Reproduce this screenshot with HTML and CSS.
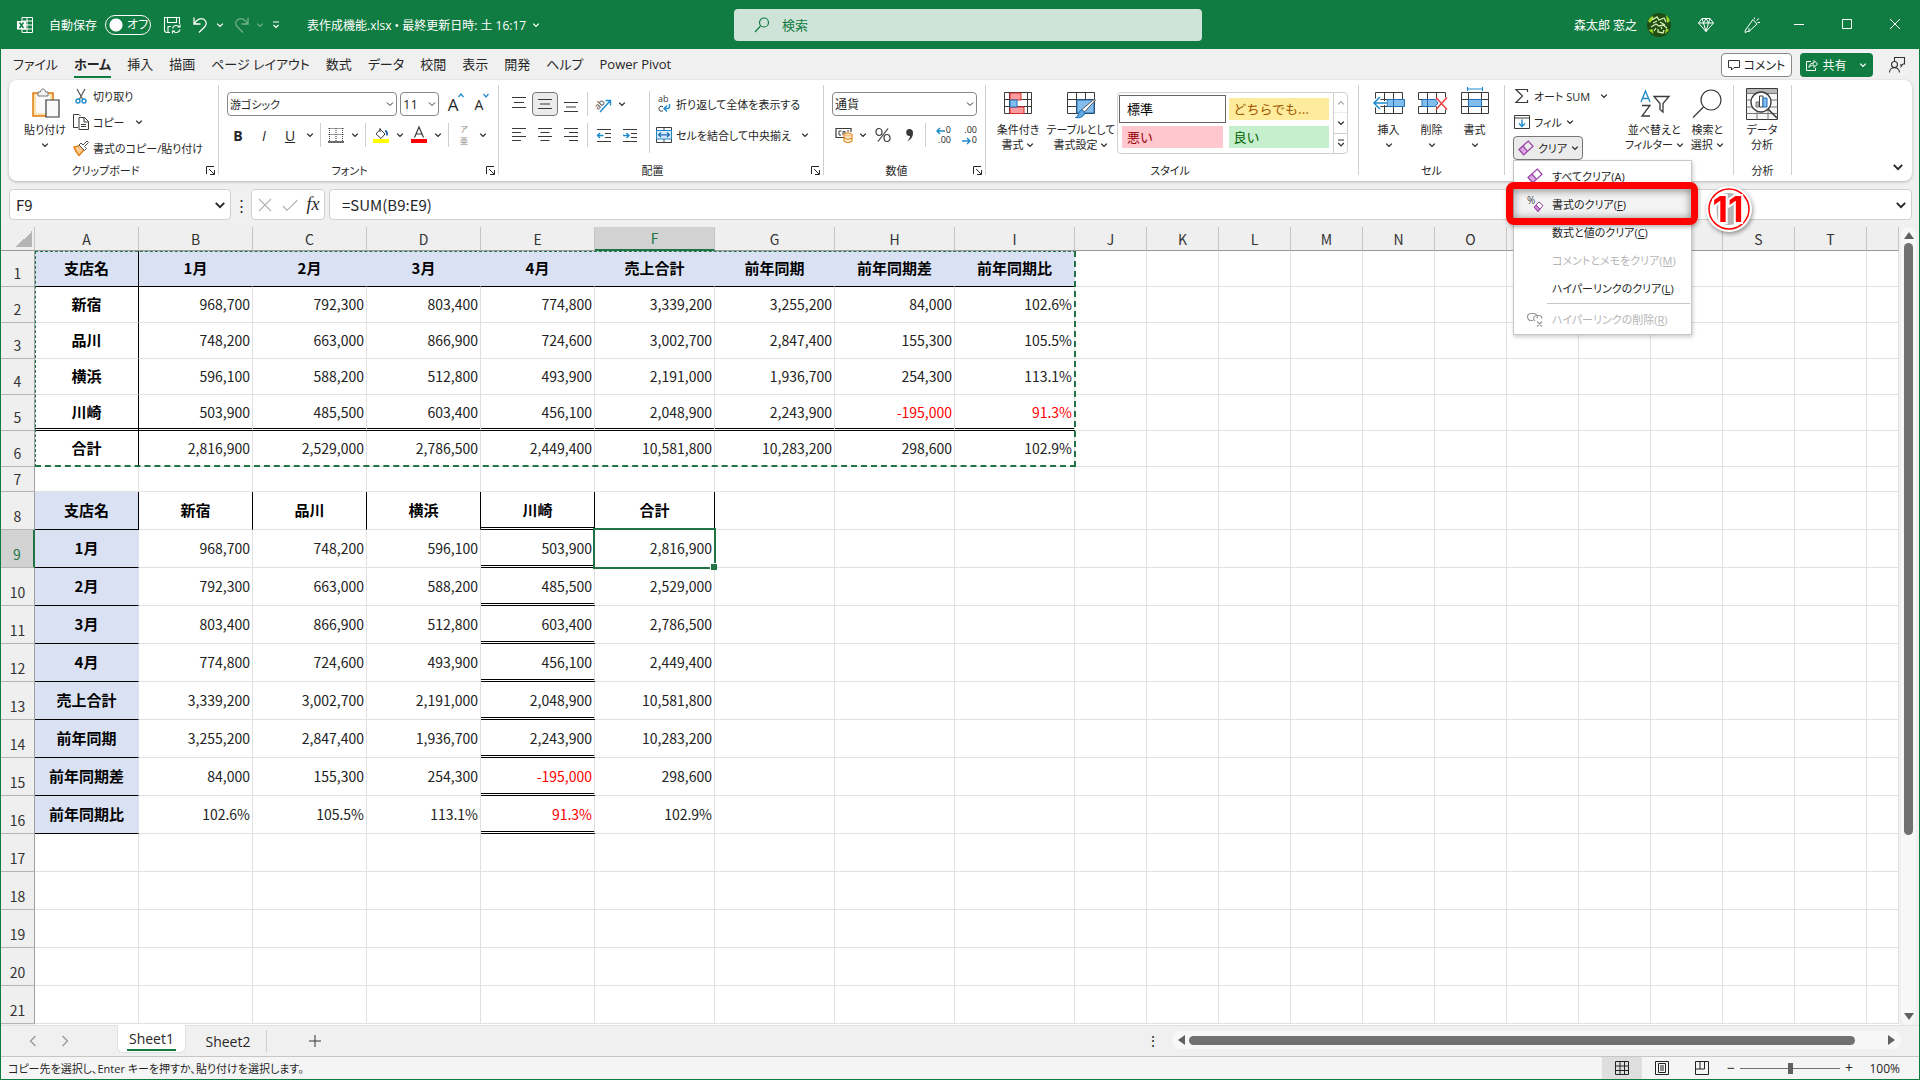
FILE: index.html
```html
<!DOCTYPE html>
<html lang="ja">
<head>
    <meta charset="UTF-8">
    <meta name="viewport" content="width=device-width, initial-scale=1.0">
    <title>表作成機能.xlsx - Excel</title>
    <link rel="stylesheet" href="styles.css">
</head>
<body>
<!-- 共通アイコン -->
<svg class="symbols" aria-hidden="true">
    <symbol id="chev" viewBox="0 0 8 8"><path d="M1.2 2.6 4 5.4 6.8 2.6" fill="none" stroke="currentColor" stroke-width="1.3"/></symbol>
    <symbol id="launch" viewBox="0 0 9 9"><path d="M.5 8V.5H8M3 3l5 5M8.5 4v4.5H4" fill="none" stroke="currentColor"/></symbol>
    <symbol id="eraser" viewBox="0 0 16 16"><path d="M1 9.5 5.5 15 9 11.5 4.8 6z" fill="#d9a9e0"/><path d="M1 9.5 10.3 1 15 6.3 5.6 15zM5 6l4.500 5.300" fill="none" stroke="#9b3fa8" stroke-width="1.2"/></symbol>
</svg>

<div class="window">
    <header class="titlebar">
        <div class="title-left">
            <svg class="i16" viewBox="0 0 16 16" fill="none" stroke="#fff"><path d="M5 4V.5h10.500v15H5V12M5.500 4H15M10 .5v15M9 8h6.500M5 12h10.500"/><rect x="0" y="4" width="9" height="8.500" fill="#fff" stroke="none"/><path d="m2.500 5.500 4 5.500m0-5.500-4 5.500" stroke="#107c41" stroke-width="1.500"/></svg>
            <label for="autosave">自動保存</label>
            <span class="toggle"><input type="checkbox" id="autosave"><span>オフ</span></span>
            <button class="tb" aria-label="保存"><svg class="i18" viewBox="0 0 18 18" fill="none" stroke="#fff" stroke-width="1.100"><path d="M7 16.500H3L1.500 15V1.500h15V8M4.500 1.500v5h9v-5M5 16.500V10.500h3"/><path d="M9.500 12.500a4 4 0 0 1 7-1.500m.5-2.500V11h-2.500M17 13.500a4 4 0 0 1-7 1.500m-.5 2.500V15H12"/></svg></button>
            <button class="tb wide" aria-label="元に戻す"><svg class="i18" viewBox="0 0 18 18" fill="none" stroke="#fff" stroke-width="1.300"><path d="M2 1.500v6.500h6.500M2.500 7.500C5 3 9 1.500 12 3.500c3.500 2.500 2.500 5.500 0 8L7 16.500"/></svg><svg class="c"><use href="#chev"/></svg></button>
            <button class="tb wide dim" aria-label="やり直し"><svg class="i18" viewBox="0 0 18 18" fill="none" stroke="#fff" stroke-width="1.300"><path d="M16 1.500v6.500H9.500M15.500 7.500C13 3 9 1.500 6 3.500 2.500 6 3.500 9 6 11.500l5 5"/></svg><svg class="c"><use href="#chev"/></svg></button>
            <button class="tb" aria-label="クイック アクセス ツール バーのカスタマイズ"><svg class="c" viewBox="0 0 8 8" fill="none" stroke="#fff" stroke-width="1.200"><path d="M1 1h6M1.500 4 4 6.500 6.500 4"/></svg></button>
            <button class="doc-title">表作成機能.xlsx • 最終更新日時: 土 16:17 <svg class="c"><use href="#chev"/></svg></button>
        </div>
        <div class="search">
            <svg class="i16" viewBox="0 0 16 16" fill="none" stroke="#107c41" stroke-width="1.200"><circle cx="10" cy="5.500" r="4.500"/><path d="M6.500 9 1 15"/></svg>
            <input type="text" placeholder="検索" aria-label="検索">
        </div>
        <div class="title-right">
            <span>森太郎 窓之</span>
            <svg class="avatar" viewBox="0 0 24 24"><circle cx="12" cy="12" r="12" fill="#1f4d14"/><path d="M1 8a12 12 0 0 1 4-5l2 2-4 5zM19 2a12 12 0 0 1 4 6l-3 2zM1.500 17l4-1 1 5zM22 17l-3-2-1 6z" fill="#9bd32a"/><path d="M5 7l5-3 2 3 5-2 2 4M6 10l4-2M13 9l5 3M4 14l5-3 3 2 4-1 4 3M7 18l2-3M11 16v3l5 1 1-3M14 14l1 2" fill="none" stroke="#d6efb4" stroke-width="1.300"/></svg>
            <button class="tb" aria-label="プレミアム"><svg class="i16" viewBox="0 0 16 16" fill="none" stroke="#fff"><path d="M4 1.500h8L15.500 6 8 14.500.5 6zM.5 6h15M4 1.500 5.500 6 8 14.500 10.500 6 12 1.500M5.500 6 8 1.500 10.500 6"/></svg></button>
            <button class="tb" aria-label="描画"><svg class="i16" viewBox="0 0 16 16" fill="none" stroke="#fff"><path d="M9 2.500 13 7 5 14.500H3.500L1 15.500 1.500 13zM5 14.500V11M10.500 2V.5M12.500 3.500l2.500-2M13.500 5.500H16"/></svg></button>
            <button class="win" aria-label="最小化"><svg viewBox="0 0 10 10"><path d="M0 5.500h10" stroke="#fff"/></svg></button>
            <button class="win" aria-label="最大化"><svg viewBox="0 0 10 10"><path d="M.5.5h9v9h-9z" fill="none" stroke="#fff"/></svg></button>
            <button class="win" aria-label="閉じる"><svg viewBox="0 0 10 10"><path d="m0 0 10 10M10 0 0 10" stroke="#fff"/></svg></button>
        </div>
    </header>

    <nav class="tabs">
        <button>ファイル</button>
        <button class="active">ホーム</button>
        <button>挿入</button>
        <button>描画</button>
        <button>ページ レイアウト</button>
        <button>数式</button>
        <button>データ</button>
        <button>校閲</button>
        <button>表示</button>
        <button>開発</button>
        <button>ヘルプ</button>
        <button>Power Pivot</button>
        <div class="tab-actions">
            <button class="comment"><svg class="i12" viewBox="0 0 12 12" fill="none" stroke="#333"><path d="M.5 1.500h11v7H6L3.500 11V8.500h-3z"/></svg>コメント</button>
            <button class="share"><svg class="i12" viewBox="0 0 12 12" fill="none" stroke="#fff"><path d="M5 2.500H.5v9h9V9M3 8.500c0-3 2-4.500 5-4.500V1.500l3.500 3.500L8 8.500V6C6 6 4 6.500 3 8.500z"/></svg>共有<svg class="c"><use href="#chev"/></svg></button>
            <button class="person" aria-label="アカウント"><svg class="i16" viewBox="0 0 16 16" fill="none" stroke="#333" stroke-width="1.100"><path d="M5.500 4V.5h10v6.500H14L12 9.500V7"/><circle cx="5.500" cy="7.500" r="3"/><path d="M.5 15.500c0-6.500 10-6.500 10 0"/></svg></button>
        </div>
    </nav>

    <div class="ribbon">
        <section class="group clipboard">
            <div class="group-body">
                <button class="big">
                    <svg class="i32" viewBox="0 0 32 32"><path d="M4 5h20v23H4z" fill="#fbe3b0" stroke="#e07b10" stroke-width="1.500"/><path d="M7 7h14v18H7z" fill="#fafafa"/><path d="M9 8V4h2.500c0-4 5-4 5 0H19v4z" fill="#f5f5f5" stroke="#797775"/><path d="M17 12h13v17H17z" fill="#fafafa" stroke="#3b3a39" stroke-width="1.200"/></svg>
                    貼り付け<br><svg class="c"><use href="#chev"/></svg>
                </button>
                <div class="stack">
                    <button class="small"><svg class="i16" viewBox="0 0 16 16" fill="none"><path d="M4 1l5.500 10M12 1 6.500 11" stroke="#555" stroke-width="1.200"/><circle cx="5" cy="13" r="2" stroke="#1e8bcd" stroke-width="1.400"/><circle cx="11" cy="13" r="2" stroke="#1e8bcd" stroke-width="1.400"/></svg>切り取り</button>
                    <button class="small"><svg class="i16" viewBox="0 0 16 16" fill="none" stroke="#3b3a39"><path d="M5 13.500H.5V.5H6L7.500 2"/><path d="M6 3.500h5.500l4 4v8H6zM11 3.500V8h4.500M8 10.500h5M8 12.500h5"/></svg>コピー<svg class="c gap"><use href="#chev"/></svg></button>
                    <button class="small"><svg class="i16" viewBox="0 0 16 16"><path d="M1 7c3 0 4-1 6-2l4 5-5 5.500C4 13 2 11 1 7z" fill="#fbc98a" stroke="#e07b10" stroke-width="1.300"/><path d="M6 5l2-2 2 2 4-4 1.500 1.500-4 4 2 2-2 2z" fill="#fff" stroke="#555"/></svg>書式のコピー/貼り付け</button>
                </div>
            </div>
            <h2>クリップボード</h2><button class="launcher" aria-label="クリップボード設定"><svg><use href="#launch"/></svg></button>
        </section>

        <section class="group font">
            <div class="group-body rows">
                <div class="row">
                    <select class="font-name" aria-label="フォント"><option>游ゴシック</option></select>
                    <select class="font-size" aria-label="フォント サイズ"><option>11</option></select>
                    <button class="ib letter" aria-label="フォント サイズの拡大"><span class="l18">A</span><svg class="tip" viewBox="0 0 6 8"><path d="M.5 5 3 2l2.500 3" fill="none" stroke="#1e8bcd" stroke-width="1.200"/></svg></button>
                    <button class="ib letter" aria-label="フォント サイズの縮小"><span class="l15">A</span><svg class="tip" viewBox="0 0 6 8"><path d="M.5 2 3 5l2.500-3" fill="none" stroke="#1e8bcd" stroke-width="1.200"/></svg></button>
                </div>
                <div class="row">
                    <button class="ib biu"><b>B</b></button>
                    <button class="ib biu"><i>I</i></button>
                    <button class="ib biu"><u>U</u></button>
                    <button class="cb" aria-label="下線"><svg class="c"><use href="#chev"/></svg></button>
                    <span class="vsep"></span>
                    <button class="ib" aria-label="罫線"><svg class="i16" viewBox="0 0 16 16" fill="none" stroke="#3b3a39"><path d="M.5 1.500h15M.5 7.500h15M1.500 1v13M8 1v13M14.500 1v13" stroke-dasharray="1 1"/><path d="M0 15h16" stroke-width="1.500"/></svg></button>
                    <button class="cb" aria-label="罫線の種類"><svg class="c"><use href="#chev"/></svg></button>
                    <span class="vsep"></span>
                    <button class="ib" aria-label="塗りつぶしの色"><svg class="i16" viewBox="0 0 16 16" fill="none"><path d="M7 2.500 3 7l5 4.500 4-4.500-5-5zM7 5V1" stroke="#3b3a39"/><path d="M12 4c2.500 0 2 3 2 4.500" stroke="#1e5fae" stroke-width="1.800"/><path d="M0 12h16v4H0z" fill="#ff0"/></svg></button>
                    <button class="cb" aria-label="色の選択"><svg class="c"><use href="#chev"/></svg></button>
                    <button class="ib" aria-label="フォントの色"><svg class="i16" viewBox="0 0 16 16"><path d="M3.500 10.500 8 0l4.500 10.500M5 7h6" fill="none" stroke="#3b3a39" stroke-width="1.200"/><path d="M0 12h16v4H0z" fill="#f00"/></svg></button>
                    <button class="cb" aria-label="文字色の選択"><svg class="c"><use href="#chev"/></svg></button>
                    <span class="vsep"></span>
                    <button class="ib ruby" aria-label="ふりがな"><span>ア</span><span>亜</span></button>
                    <button class="cb" aria-label="ふりがなの設定"><svg class="c"><use href="#chev"/></svg></button>
                </div>
            </div>
            <h2>フォント</h2><button class="launcher" aria-label="フォント設定"><svg><use href="#launch"/></svg></button>
        </section>

        <section class="group align">
            <div class="group-body">
                <div class="rows">
                    <div class="row">
                        <button class="ib26" aria-label="上揃え"><svg class="i16" viewBox="0 0 16 16" stroke="#3b3a39" stroke-width="1.200"><path d="M1 1.500h14M3 6.500h10M1 11.500h14"/></svg></button>
                        <button class="ib26 on" aria-label="上下中央揃え"><svg class="i16" viewBox="0 0 16 16" stroke="#3b3a39" stroke-width="1.200"><path d="M1 3.500h14M3 8h10M1 12.500h14"/></svg></button>
                        <button class="ib26" aria-label="下揃え"><svg class="i16" viewBox="0 0 16 16" stroke="#3b3a39" stroke-width="1.200"><path d="M1 6.500h14M3 11h10M1 15.500h14"/></svg></button>
                        <span class="vsep"></span>
                        <button class="ib" aria-label="方向"><svg class="i18" viewBox="0 0 18 18"><text x="0" y="12" class="ab" transform="rotate(-45 6 9)">ab</text><path d="M6 17 16 6M11.500 5.500H16.500V10.500" fill="none" stroke="#1e8bcd" stroke-width="1.400"/></svg></button>
                        <button class="cb" aria-label="方向の選択"><svg class="c"><use href="#chev"/></svg></button>
                    </div>
                    <div class="row">
                        <button class="ib26" aria-label="左揃え"><svg class="i16" viewBox="0 0 16 16" stroke="#3b3a39" stroke-width="1.200"><path d="M1 1.500h14M1 5.500h9M1 9.500h14M1 13.500h9"/></svg></button>
                        <button class="ib26" aria-label="中央揃え"><svg class="i16" viewBox="0 0 16 16" stroke="#3b3a39" stroke-width="1.200"><path d="M1 1.500h14M3.500 5.500h9M1 9.500h14M3.500 13.500h9"/></svg></button>
                        <button class="ib26" aria-label="右揃え"><svg class="i16" viewBox="0 0 16 16" stroke="#3b3a39" stroke-width="1.200"><path d="M1 1.500h14M6 5.500h9M1 9.500h14M6 13.500h9"/></svg></button>
                        <span class="vsep"></span>
                        <button class="ib26" aria-label="インデントを減らす"><svg class="i16" viewBox="0 0 16 16" fill="none" stroke="#3b3a39"><path d="M1 2.500h14M9 6.500h6M9 10.500h6M1 14.500h14"/><path d="M7.500 8.500H1.500M4 6 1.500 8.500 4 11" stroke="#1e8bcd" stroke-width="1.400"/></svg></button>
                        <button class="ib26" aria-label="インデントを増やす"><svg class="i16" viewBox="0 0 16 16" fill="none" stroke="#3b3a39"><path d="M1 2.500h14M9 6.500h6M9 10.500h6M1 14.500h14"/><path d="M1 8.500h6M4.500 6 7 8.500 4.500 11" stroke="#1e8bcd" stroke-width="1.400"/></svg></button>
                    </div>
                </div>
                <span class="vsep tall"></span>
                <div class="rows wrap-col">
                    <button class="small"><svg class="i16" viewBox="0 0 16 16"><text x="2" y="6" class="ab">ab</text><path d="M7 10.500q-4-1-4 2.300t4 2" fill="none" stroke="#3b3a39"/><path d="M13.500 8v2.500q0 2-2 2H8.500M11 9.500 8 12.500l3 3" fill="none" stroke="#1e8bcd" stroke-width="1.400"/></svg>折り返して全体を表示する</button>
                    <button class="small"><svg class="i16" viewBox="0 0 16 16" fill="none"><path d="M.5.5h15v15H.5zM8 .5v3M8 12v3.500" stroke="#3b3a39"/><path d="M.5 3.500h15v8.500H.5z" fill="#d4eafa" stroke="#1e8bcd"/><path d="M3 7.800h10M5 5.500 2.500 7.800 5 10M11 5.500l2.500 2.300L11 10" stroke="#1e6fb8" stroke-width="1.200"/></svg>セルを結合して中央揃え<svg class="c gap"><use href="#chev"/></svg></button>
                </div>
            </div>
            <h2>配置</h2><button class="launcher" aria-label="配置の設定"><svg><use href="#launch"/></svg></button>
        </section>

        <section class="group number">
            <div class="group-body rows">
                <div class="row">
                    <select class="num-format" aria-label="表示形式"><option>通貨</option></select>
                </div>
                <div class="row">
                    <button class="ib" aria-label="通貨表示形式"><svg class="i18" viewBox="0 0 18 18"><path d="M9 11.500H1v-9h15V6" fill="none" stroke="#3b3a39" stroke-width="1.200"/><path d="M6.500 5H4v4h2M8 9V5.500h2V9M12 5h2" fill="none" stroke="#3b3a39"/><ellipse cx="13" cy="8.500" rx="4" ry="1.500" fill="#fbe3b0" stroke="#e07b10"/><path d="M9 8.500v7q4 2.500 8 0v-7M9 12q4 2.500 8 0" fill="#fbe3b0" fill-opacity=".6" stroke="#e07b10"/></svg></button>
                    <button class="cb" aria-label="通貨の選択"><svg class="c"><use href="#chev"/></svg></button>
                    <button class="ib26" aria-label="パーセント"><svg class="i16" viewBox="0 0 16 16" fill="none" stroke="#3b3a39" stroke-width="1.200"><ellipse cx="4" cy="5" rx="3" ry="3.500"/><ellipse cx="12" cy="11" rx="3" ry="3.500"/><path d="M13 1.500 3 14.500"/></svg></button>
                    <button class="ib26" aria-label="桁区切り"><svg class="i16" viewBox="0 0 16 16"><path d="M8.500 2a3.500 3.500 0 0 1 3.500 4c0 4-2.500 7-6 8.500 2-2 3-4 3-5.500A3.500 3.500 0 1 1 8.500 2z" fill="#3b3a39"/></svg></button>
                    <span class="vsep"></span>
                    <button class="ib26 dec" aria-label="小数点以下の表示桁数を増やす"><span><svg class="arr" viewBox="0 0 9 8"><path d="M9 4H1M4 1 1 4l3 3"/></svg>0</span><span>.00</span></button>
                    <button class="ib26 dec" aria-label="小数点以下の表示桁数を減らす"><span>.00</span><span><svg class="arr" viewBox="0 0 9 8"><path d="M0 4h8M5 1l3 3-3 3"/></svg>0</span></button>
                </div>
            </div>
            <h2>数値</h2><button class="launcher" aria-label="数値の設定"><svg><use href="#launch"/></svg></button>
        </section>

        <section class="group styles">
            <div class="group-body">
                <button class="big">
                    <svg class="i32" viewBox="0 0 32 32" fill="none"><path d="M2.500 4.500h27v21h-27zM2.500 11.500h27M2.500 18.500h27M7.500 4.500v21M25.500 4.500v21" fill="#fff" stroke="#3b3a39"/><path d="M8 5h11v7H8zM8 19h14v6.500H8z" fill="#ff9a9e" stroke="#d92c2c"/><path d="M8 12h7v7H8z" fill="#83bdec" stroke="#1e6fb8"/></svg>
                    条件付き<br>書式 <svg class="c"><use href="#chev"/></svg>
                </button>
                <button class="big wide-big">
                    <svg class="i32" viewBox="0 0 32 32" fill="none"><path d="M2.500 4.500h27v21h-27zM2.500 11.500h27M2.500 18.500h27M11.500 4.500v21M20.500 4.500v21" fill="#fff" stroke="#3b3a39"/><path d="M12 12h17v13H12z" fill="#83bdec" stroke="#1e6fb8"/><path d="m30.500 12-11 12-3-2 11-9.500q3-2 3-.5z" fill="#fff" stroke="#555"/><path d="M16.500 22q4 1 3 4-3 5-9 3.500 3-1 3-4 1-3 3-3.500z" fill="#62a9e0" stroke="#1e6fb8"/></svg>
                    テーブルとして<br>書式設定 <svg class="c"><use href="#chev"/></svg>
                </button>
                <div class="gallery">
                    <div class="swatches">
                        <button class="sw normal">標準</button>
                        <button class="sw neutral">どちらでも...</button>
                        <button class="sw bad">悪い</button>
                        <button class="sw good">良い</button>
                    </div>
                    <div class="gallery-nav">
                        <button class="dim" aria-label="前へ"><svg class="c flip"><use href="#chev"/></svg></button>
                        <button aria-label="次へ"><svg class="c"><use href="#chev"/></svg></button>
                        <button aria-label="その他"><svg class="c" viewBox="0 0 8 8" fill="none" stroke="#333" stroke-width="1.200"><path d="M1 1h6M1.200 4 4 6.800 6.800 4"/></svg></button>
                    </div>
                </div>
            </div>
            <h2>スタイル</h2>
        </section>

        <section class="group cells">
            <div class="group-body">
                <button class="big narrow">
                    <svg class="i32" viewBox="0 0 32 32" fill="none"><path d="M2.500 4.500h27v21h-27zM2.500 11.500h27M2.500 18.500h27M11.500 4.500v21M20.500 4.500v21" fill="#fff" stroke="#3b3a39"/><path d="M14 11.500h17.500v7H14zM20.500 12v6.500" fill="#83bdec" stroke="#1e6fb8"/><path d="M1 15h13M7 9l-6 6 6 6" stroke="#fff" stroke-width="4"/><path d="M1 15h13M7 9l-6 6 6 6" stroke="#1e8bcd" stroke-width="1.500"/></svg>
                    挿入<br><svg class="c"><use href="#chev"/></svg>
                </button>
                <button class="big narrow">
                    <svg class="i32" viewBox="0 0 32 32" fill="none"><path d="M2.500 11.500v-7h27v5M2.500 11.500h17M11.500 4.500v7M20.500 4.500v7M2.500 18.500v7h27v-4M2.500 18.500h17M11.500 18.500v7M20.500 18.500v7" stroke="#3b3a39"/><path d="M6 11.500h13l3 3.500-3 3.500H6zM11.500 12v6" fill="#83bdec" stroke="#1e6fb8"/><path d="m20 9.500 11 12M31 9.500l-11 12" stroke="#ee3e3e" stroke-width="1.500"/></svg>
                    削除<br><svg class="c"><use href="#chev"/></svg>
                </button>
                <button class="big narrow">
                    <svg class="i32" viewBox="0 0 32 32" fill="none"><path d="M2.500 4.500h27v21h-27zM2.500 11.500h27M2.500 18.500h27M9.500 4.500v21M22.500 4.500v21" fill="#fff" stroke="#3b3a39"/><path d="M9.500 11.500h13v7h-13z" fill="#83bdec" stroke="#1e6fb8"/><path d="M8.500 1h15M8.500-1v4M23.500-1v4" stroke="#1e8bcd" stroke-width="1.200"/></svg>
                    書式<br><svg class="c"><use href="#chev"/></svg>
                </button>
            </div>
            <h2>セル</h2>
        </section>

        <section class="group edit">
            <div class="group-body">
                <div class="stack">
                    <button class="small"><svg class="i16" viewBox="0 0 16 16"><path d="M13.500 4V1.500H2L8.500 8 2 14.500h11.500V12" fill="none" stroke="#3b3a39" stroke-width="1.200"/></svg>オート SUM<svg class="c gap"><use href="#chev"/></svg></button>
                    <button class="small"><svg class="i16" viewBox="0 0 16 16" fill="none"><path d="M.5 1.500h15v13H.5zM.5 4h15" stroke="#3b3a39"/><path d="M8 5.500v7M5 9.500l3 3 3-3" stroke="#1e8bcd" stroke-width="1.400"/></svg>フィル <svg class="c"><use href="#chev"/></svg></button>
                    <div class="clear">
                        <button class="small open" aria-expanded="true"><svg class="i16"><use href="#eraser"/></svg>クリア <svg class="c"><use href="#chev"/></svg></button>
                        <div class="menu" role="menu">
                            <button role="menuitem"><svg class="i16"><use href="#eraser"/></svg><span>すべてクリア(<u>A</u>)</span></button>
                            <button role="menuitem" class="hover"><svg class="i16" viewBox="0 0 16 16"><text x="0" y="8" class="pct">%</text><path d="m7 11 5-5 4 3.500L11 15.500z" fill="#fff" stroke="#9b3fa8"/><path d="m7 11 2-2 4 4-2 2.500z" fill="#c98ad2" stroke="#9b3fa8"/></svg><span>書式のクリア(<u>F</u>)</span>
                            </button>
                            <button role="menuitem"><i class="i16"></i><span>数式と値のクリア(<u>C</u>)</span></button>
                            <button role="menuitem" disabled><i class="i16"></i><span>コメントとメモをクリア(<u>M</u>)</span></button>
                            <button role="menuitem"><i class="i16"></i><span>ハイパーリンクのクリア(<u>L</u>)</span></button>
                            <hr>
                            <button role="menuitem" disabled><svg class="i16" viewBox="0 0 16 16" fill="none" stroke="#999" stroke-width="1.200"><path d="M6 9.500H4a3.500 3.500 0 0 1 0-7h3a3.500 3.500 0 0 1 3 5M8 10a3 3 0 0 1 1-5.500h3a3 3 0 0 1 3 3M10 10.500l5 5M15 10.500l-5 5"/></svg><span>ハイパーリンクの削除(<u>R</u>)</span></button>
                            <div class="callout">
                                <svg viewBox="0 0 48 48"><circle cx="24" cy="24" r="23" fill="#fff"/><path d="M13 12q11-8 22 0 3 12 0 24-11 8-22 0-3-12 0-24z" fill="#b5b5b5"/><circle cx="24" cy="24" r="20" fill="none" stroke="#f00" stroke-width="1.500"/><text x="23" y="37" text-anchor="middle">11</text></svg>
                            </div>
                        </div>
                    </div>
                </div>
                <button class="big sort">
                    <svg class="i32" viewBox="0 0 32 32" fill="none" stroke-width="1.300"><path d="m3 14 4.500-11L12 14M4.500 10.500h6" stroke="#1e8bcd"/><path d="M4 17.500h8L4 28h8" stroke="#3b3a39"/><path d="M16 8.500h15l-6 7v8.500l-3-2.500v-6z" stroke="#3b3a39"/></svg>
                    並べ替えと<br>フィルター <svg class="c"><use href="#chev"/></svg>
                </button>
                <button class="big">
                    <svg class="i32" viewBox="0 0 32 32" fill="none" stroke="#3b3a39" stroke-width="1.200"><circle cx="20" cy="12" r="10"/><path d="M12.500 19 2 29.500"/></svg>
                    検索と<br>選択 <svg class="c"><use href="#chev"/></svg>
                </button>
            </div>
        </section>

        <section class="group analysis">
            <div class="group-body">
                <button class="big">
                    <svg class="i32" viewBox="0 0 32 32" fill="none" stroke="#3b3a39"><path d="M.5.500h31v31H.5z" fill="#f6f6f6"/><path d="M1 1h30v4H1z" fill="#b8b8b8" stroke="none"/><path d="M.5 5.500h31M.5 12h31M.5 19h31M.5 25.500h31M11 5.500v26M22 5.500v26" stroke="#777"/><circle cx="15" cy="14" r="10" fill="#fff" stroke-width="1.300"/><path d="M10 14h3v5h-3z" fill="#bbb" stroke="#777"/><path d="M13.500 8h3.500v11h-3.500z" fill="#fff"/><path d="M17 10h4v9h-4z" fill="#83bdec" stroke="#1e6fb8"/><path d="m22 21 9 9" stroke-width="1.600"/></svg>
                    データ<br>分析
                </button>
            </div>
            <h2>分析</h2>
        </section>
        <button class="collapse" aria-label="リボンを折りたたむ"><svg class="c12"><use href="#chev"/></svg></button>
    </div>

    <div class="formula-bar">
        <div class="namebox"><input type="text" value="F9" aria-label="名前ボックス"><svg class="c12"><use href="#chev"/></svg></div>
        <span class="dots">⋮</span>
        <div class="fx">
            <button aria-label="キャンセル"><svg class="i16" viewBox="0 0 16 16" stroke="#b5b5b5" stroke-width="1.200"><path d="m2 2 12 12M14 2 2 14"/></svg></button>
            <button aria-label="入力"><svg class="i16" viewBox="0 0 16 16" fill="none" stroke="#b5b5b5" stroke-width="1.200"><path d="m1 9 4 4.500L15.500 3"/></svg></button>
            <button class="fx-btn" aria-label="関数の挿入">fx</button>
        </div>
        <div class="formula"><input type="text" value="=SUM(B9:E9)" aria-label="数式"><svg class="c12"><use href="#chev"/></svg></div>
    </div>

    <main class="workspace">
        <div class="sheet-wrap">
            <table class="sheet" id="sheet"></table>
            <div class="ants"></div>
        </div>
        <div class="vscroll"><i class="up"></i><i class="thumb"></i><i class="down"></i></div>
    </main>

    <footer class="sheet-tabs">
        <button class="nav" aria-label="前のシート"><svg viewBox="0 0 8 12" fill="none" stroke="#999" stroke-width="1.300"><path d="M6.500 1 1.500 6l5 5"/></svg></button>
        <button class="nav" aria-label="次のシート"><svg viewBox="0 0 8 12" fill="none" stroke="#999" stroke-width="1.300"><path d="m1.500 1 5 5-5 5"/></svg></button>
        <button class="sheet-tab active"><span>Sheet1</span></button>
        <button class="sheet-tab">Sheet2</button>
        <button class="add" aria-label="新しいシート"><svg viewBox="0 0 12 12" stroke="#333"><path d="M6 0v12M0 6h12"/></svg></button>
        <span class="dots">⋮</span>
        <div class="hscroll"><i class="left"></i><i class="thumb"></i><i class="right"></i></div>
    </footer>

    <div class="status">
        <span class="message">コピー先を選択し、Enter キーを押すか、貼り付けを選択します。</span>
        <button class="view on" aria-label="標準"><svg viewBox="0 0 14 14" fill="none" stroke="#222"><path d="M.5.500h13v13H.5zM.5 5h13M.5 9.500h13M5 .5v13M9.500.5v13"/></svg></button>
        <button class="view" aria-label="ページ レイアウト"><svg viewBox="0 0 14 14" fill="none" stroke="#222"><path d="M.5.500h13v13H.5zM3.500 2.500h7v9h-7zM5 5h4M5 7h4M5 9h4"/></svg></button>
        <button class="view" aria-label="改ページ プレビュー"><svg viewBox="0 0 14 14" fill="none" stroke="#222"><path d="M.5.500h13v13H.5zM5 .5v7.500M9.500.5v7.500M.5 8h9"/></svg></button>
        <button class="zoom-btn" aria-label="縮小">−</button>
        <input type="range" min="0" max="200" value="100" aria-label="ズーム">
        <button class="zoom-btn" aria-label="拡大">+</button>
        <span class="percent">100%</span>
    </div>
</div>
<script src="sheet.js"></script>
</body>
</html>
```
FILE: sheet.js
```js
// セルのデータ(行番号 -> A列からの値)
const data = {
    1: ['支店名', '1月', '2月', '3月', '4月', '売上合計', '前年同期', '前年同期差', '前年同期比'],
    2: ['新宿', '968,700', '792,300', '803,400', '774,800', '3,339,200', '3,255,200', '84,000', '102.6%'],
    3: ['品川', '748,200', '663,000', '866,900', '724,600', '3,002,700', '2,847,400', '155,300', '105.5%'],
    4: ['横浜', '596,100', '588,200', '512,800', '493,900', '2,191,000', '1,936,700', '254,300', '113.1%'],
    5: ['川崎', '503,900', '485,500', '603,400', '456,100', '2,048,900', '2,243,900', '-195,000', '91.3%'],
    6: ['合計', '2,816,900', '2,529,000', '2,786,500', '2,449,400', '10,581,800', '10,283,200', '298,600', '102.9%'],
    8: ['支店名', '新宿', '品川', '横浜', '川崎', '合計'],
    9: ['1月', '968,700', '748,200', '596,100', '503,900', '2,816,900'],
    10: ['2月', '792,300', '663,000', '588,200', '485,500', '2,529,000'],
    11: ['3月', '803,400', '866,900', '512,800', '603,400', '2,786,500'],
    12: ['4月', '774,800', '724,600', '493,900', '456,100', '2,449,400'],
    13: ['売上合計', '3,339,200', '3,002,700', '2,191,000', '2,048,900', '10,581,800'],
    14: ['前年同期', '3,255,200', '2,847,400', '1,936,700', '2,243,900', '10,283,200'],
    15: ['前年同期差', '84,000', '155,300', '254,300', '-195,000', '298,600'],
    16: ['前年同期比', '102.6%', '105.5%', '113.1%', '91.3%', '102.9%']
};
const columns = 'ABCDEFGHIJKLMNOPQRST'.split('').concat('');
const sheet = document.getElementById('sheet');

function colClass(c) {
    if (c === 0) return 'w-a';
    if (c < 5) return 'w-month';
    if (c < 9) return 'w-total';
    return c < 20 ? 'w-std' : '';
}

// セルの書式
function cellClass(r, c, text) {
    const cls = [];
    if (r === 1 || r === 8 || c === 0) cls.push('head');
    if ((r === 1 && c < 9) || (c === 0 && r >= 8 && r <= 16)) cls.push('fill');
    if (c === 0 && r <= 6) cls.push('line-r');
    if (r === 1 && c < 9) cls.push('line-b');
    if (r === 5 && c < 9) cls.push('double-b');
    if (r === 8 && c < 6) cls.push('line-r');
    if (c === 0 && r >= 8 && r <= 16) cls.push('line-b');
    if (c === 4 && r >= 8 && r <= 16) cls.push('double-b');
    if (text === '-195,000' || text === '91.3%') cls.push('minus');
    if (r === 9 && c === 5) cls.push('selected');
    return cls.join(' ');
}

let html = '<colgroup><col class="w-row">';
columns.forEach((name, c) => { html += `<col class="${colClass(c)}">`; });
html += '</colgroup><thead><tr><th class="corner"></th>';
columns.forEach(name => { html += `<th class="${name === 'F' ? 'current' : ''}">${name}</th>`; });
html += '</tr></thead><tbody>';

for (let r = 1; r <= 21; r++) {
    const rowClass = r === 7 ? 'short' : r > 7 ? 'tall' : '';
    html += `<tr class="${rowClass}"><th class="${r === 9 ? 'current' : ''}">${r}</th>`;
    columns.forEach((name, c) => {
        const text = (data[r] && data[r][c]) || '';
        html += `<td class="${cellClass(r, c, text)}">${text}</td>`;
    });
    html += '</tr>';
}
sheet.innerHTML = html + '</tbody>';
```
FILE: styles.css
```css
* {
    box-sizing: border-box;
}
body {
    margin: 0;
    background: #f0f0f0;
    color: #262626;
    font: 12px "Open Sans", "Noto Sans CJK JP", sans-serif;
    font-feature-settings: "palt";
}
button, input, select {
    font: inherit;
    font-feature-settings: inherit;
    color: inherit;
    margin: 0;
    padding: 0;
    border: 0;
    background: none;
}
svg {
    flex: none;
    overflow: visible;
}
.symbols {
    display: none;
}
.window {
    display: flex;
    flex-direction: column;
    height: 100vh;
    border: 1px solid #107c41;
    border-top: 0;
    overflow: hidden;
}

/* icon sizes */
.i12 { width: 12px; height: 12px; }
.i16 { width: 16px; height: 16px; flex: none; }
.i18 { width: 18px; height: 18px; }
.i32 { width: 32px; height: 32px; }
.c { width: 8px; height: 8px; }
.c12 { width: 12px; height: 12px; }
.flip { transform: rotate(180deg); }

/* title bar */
.titlebar {
    display: grid;
    grid-template-columns: 733fr 468fr 717fr;
    align-items: center;
    height: 49px;
    background: #107c41;
    color: #fff;
}
.title-left, .title-right {
    display: flex;
    align-items: center;
    height: 40px;
}
.title-left {
    padding-left: 16px;
}
.title-left label {
    margin: 0 8px 0 16px;
}
.toggle {
    position: relative;
    display: flex;
    width: 46px;
    height: 20px;
    margin-right: 12px;
}
.toggle input {
    appearance: none;
    width: 46px;
    height: 20px;
    border: 1px solid #fff;
    border-radius: 10px;
    background: radial-gradient(circle at 10px 9px, #fff 6px, transparent 7px);
}
.toggle span {
    position: absolute;
    left: 22px;
    top: 1px;
    line-height: 18px;
}
.tb {
    display: flex;
    align-items: center;
    gap: 6px;
    margin-right: 11px;
}
.tb.wide {
    margin-right: 8px;
}
.dim {
    opacity: .4;
}
.doc-title {
    display: flex;
    align-items: center;
    gap: 6px;
    margin-left: 16px;
    white-space: nowrap;
}
.search {
    display: flex;
    align-items: center;
    gap: 12px;
    height: 32px;
    padding-left: 20px;
    border-radius: 4px;
    background: #cfe3d8;
}
.search input {
    flex: 1;
    outline: 0;
    font-size: 13px;
}
.search input::placeholder {
    color: #107c41;
    opacity: 1;
}
.title-right {
    justify-content: flex-end;
}
.avatar {
    width: 24px;
    height: 24px;
    margin: 0 27px 0 10px;
}
.title-right .tb {
    margin-right: 30px;
}
.title-right .tb + .win {
    margin-left: -15px;
}
.win {
    width: 48px;
    height: 40px;
}
.win svg {
    width: 10px;
    height: 10px;
}

/* ribbon tabs */
.tabs {
    display: flex;
    align-items: center;
    gap: 16px;
    height: 31px;
    padding: 0 6px 0 12px;
    font-size: 13px;
    background: #f0f0f0;
}
.tabs > button {
    height: 27px;
    padding: 0;
    white-space: nowrap;
    border-bottom: 2px solid transparent;
    line-height: 24px;
}
.tabs > .active {
    font-weight: bold;
    border-color: #107c41;
}
.tab-actions {
    display: flex;
    gap: 8px;
    margin-left: auto;
    font-size: 12px;
}
.tab-actions button {
    display: flex;
    align-items: center;
    justify-content: center;
    gap: 4px;
    height: 24px;
    border-radius: 4px;
}
.tab-actions .comment {
    width: 71px;
    border: 1px solid #8a8886;
    background: #fff;
}
.tab-actions .share {
    width: 73px;
    background: #107c41;
    color: #fff;
}
.share .c {
    margin-left: 8px;
}
.person {
    width: 32px;
}

/* ribbon */
.ribbon {
    display: flex;
    height: 101px;
    flex: none;
    margin: 0 7px 0 8px;
    padding: 5px 0 6px;
    background: #fff;
    border-radius: 8px;
    box-shadow: 0 1px 3px rgba(0, 0, 0, .25);
    font-size: 11px;
}
.group {
    position: relative;
    flex: none;
    height: 90px;
    border-right: 1px solid #d2d0ce;
}
.group-body {
    display: flex;
    height: 78px;
    margin-top: -2px;
}
.group h2 {
    margin: 0;
    font-size: 11px;
    font-weight: normal;
    line-height: 20px;
    text-align: center;
}
.launcher {
    position: absolute;
    right: 3px;
    bottom: 0;
    width: 9px;
    height: 9px;
}
.launcher svg {
    display: block;
    width: 9px;
    height: 9px;
}
.clipboard { width: 210px; padding-left: 8px; }
.font { width: 280px; padding-left: 6px; }
.align { width: 325px; padding-left: 7px; }
.number { width: 162px; padding-left: 8px; }
.styles { width: 373px; padding-left: 4px; }
.cells { width: 146px; padding-left: 8px; }
.edit { width: 229px; padding-left: 9px; }
.analysis { width: 58px; }
.group.clipboard h2, .group.font h2, .group.align h2, .group.number h2 {
    padding-right: 24px;
}
.group.styles h2, .group.cells h2 {
    padding-right: 8px;
}
.big {
    width: 56px;
    padding-top: 5px;
    line-height: 15px;
    white-space: nowrap;
    display: block;
    align-self: flex-start;
    text-align: center;
}
.big .i32 {
    display: block;
    margin: 0 auto 2px;
}
.big.wide-big { width: 70px; }
.big.narrow { width: 43px; }
.big.sort { width: 60px; margin-left: 16px; }
.edit .big + .big { width: 46px; }
.small {
    display: flex;
    align-items: center;
    gap: 4px;
    height: 26px;
    white-space: nowrap;
}
.small .gap {
    margin-left: 6px;
}
.rows {
    display: flex;
    flex-direction: column;
    gap: 7px;
    padding-top: 9px;
}
.row {
    display: flex;
    align-items: center;
    height: 24px;
}
.rows .small {
    height: 24px;
}
.ib, .ib26, .cb {
    display: flex;
    align-items: center;
    justify-content: center;
    width: 24px;
    height: 24px;
}
.ib26, .biu {
    width: 26px;
}
.biu {
    font-size: 14px;
}
.cb {
    width: 14px;
}
.letter {
    width: 26px;
}
.l18 { font-size: 17px; }
.l15 { font-size: 14px; }
.tip {
    width: 6px;
    height: 8px;
    align-self: flex-start;
}
.vsep {
    width: 1px;
    height: 24px;
    margin: 0 3px;
    background: #d2d0ce;
}
.vsep.tall {
    height: 62px;
    margin: 8px 6px 0 6px;
}
select {
    appearance: none;
    height: 24px;
    padding: 0 2px;
    border: 1px solid #8a8886;
    border-radius: 4px;
    background: #fff url("data:image/svg+xml,%3Csvg xmlns='http://www.w3.org/2000/svg' width='8' height='8'%3E%3Cpath d='M1 2.500 4 5.500 7 2.500' fill='none' stroke='%23333'/%3E%3C/svg%3E") no-repeat right 2px center;
}
.font-name { width: 170px; margin: 0 3px 0 2px; }
.font-size { width: 39px; margin-right: 4px; font-size: 13px; }
.num-format { width: 145px; font-size: 12px; }
.ruby {
    flex-direction: column;
    color: #8a8886;
    font-size: 8px;
    line-height: 12px;
}
.on {
    border: 1px solid #797775;
    border-radius: 4px;
    background: #ebebeb;
}
.ab {
    font-size: 9px;
    fill: #3b3a39;
}
.dec {
    flex-direction: column;
    font-size: 9px;
    line-height: 10px;
    align-items: flex-end;
    padding-right: 4px;
}
.arr {
    width: 9px;
    height: 8px;
    margin-right: 1px;
    fill: none;
    stroke: #1e8bcd;
    stroke-width: 1.4px;
    vertical-align: middle;
}
.gallery {
    display: flex;
    width: 231px;
    height: 62px;
    margin: 9px 0 0 1px;
    border: 1px solid #d2d0ce;
    border-radius: 4px;
}
.swatches {
    flex: 1;
    display: grid;
    grid-template-columns: 1fr 1fr;
    grid-auto-rows: 22px;
    gap: 6px;
    padding: 5px 4px;
}
.sw {
    padding-left: 5px;
    text-align: left;
    font: 13px/18px "Noto Sans CJK JP", sans-serif;
    font-feature-settings: normal;
    white-space: nowrap;
}
.normal { outline: 1px solid #666; outline-offset: 2px; color: #000; }
.neutral { background: #ffeb9c; color: #9c5700; }
.bad { background: #ffc7ce; color: #9c0006; }
.good { background: #c6efce; color: #006100; }
.gallery-nav {
    display: flex;
    flex-direction: column;
    width: 14px;
    border-left: 1px solid #d2d0ce;
}
.gallery-nav button {
    display: flex;
    align-items: center;
    justify-content: center;
    flex: 1;
    border-bottom: 1px solid #d2d0ce;
}
.gallery-nav button:last-child {
    border: 0;
}
.collapse {
    margin: auto 8px 2px auto;
    height: 12px;
}

/* clear menu */
.clear {
    position: relative;
}
.small.open {
    width: 70px;
    height: 24px;
    margin: 1px 0 1px -1px;
    padding-left: 4px;
    border: 1px solid #797775;
    border-radius: 4px;
    background: #ebebeb;
}
.menu {
    position: absolute;
    z-index: 5;
    top: 24px;
    left: -1px;
    width: 179px;
    padding: 1px;
    border: 1px solid #c8c6c4;
    background: #fff;
    box-shadow: 1px 2px 4px rgba(0, 0, 0, .2);
}
.menu button {
    display: flex;
    align-items: center;
    gap: 9px;
    width: 100%;
    height: 28px;
    padding-left: 12px;
    font-size: 11px;
    white-space: nowrap;
    color: #222;
}
.menu button:disabled {
    color: #b5b5b5;
}
.menu .hover {
    background: #f3f3f3;
}
.menu hr {
    height: 1px;
    margin: 1px 0 1px 32px;
    border: 0;
    background: #c8c6c4;
}
.pct {
    font-size: 10px;
    fill: #444;
}
.callout {
    position: absolute;
    top: 21px;
    left: -8px;
    width: 192px;
    height: 43px;
    border: 7px solid #f00;
    border-radius: 8px;
    box-shadow: inset 0 1px 8px rgba(0, 0, 0, .5), 1px 2px 4px rgba(0, 0, 0, .3);
}
.callout svg {
    position: absolute;
    top: -4px;
    left: 192px;
    width: 48px;
    height: 48px;
    filter: drop-shadow(1px 2px 2px rgba(0, 0, 0, .4));
}
.callout text {
    font: bold 36px Inter, sans-serif;
    fill: #f00;
    stroke: #fff;
    stroke-width: 4px;
    paint-order: stroke;
}

/* formula bar */
.formula-bar {
    display: flex;
    height: 31px;
    flex: none;
    margin: 8px 7px 7px 8px;
    font: 15px "Noto Sans CJK JP", sans-serif;
}
.namebox, .fx, .formula {
    display: flex;
    align-items: center;
    border: 1px solid #d2d0ce;
    border-radius: 4px;
    background: #fff;
}
.namebox {
    width: 222px;
    padding: 0 4px 0 6px;
}
.namebox input, .formula input {
    flex: 1;
    min-width: 0;
    outline: 0;
}
.formula-bar .dots {
    width: 20px;
    text-align: center;
    line-height: 31px;
}
.fx {
    justify-content: space-around;
    width: 74px;
    margin-right: 4px;
}
.fx button {
    display: flex;
}
.fx .fx-btn {
    font: italic 18px "Liberation Serif", serif;
}
.formula {
    flex: 1;
    padding: 0 4px 0 12px;
}

/* sheet */
.workspace {
    display: flex;
    flex: 1;
    min-height: 0;
}
.sheet-wrap {
    position: relative;
    flex: 1;
    min-width: 0;
    overflow: hidden;
    background: linear-gradient(90deg, #efefef 34px, #fff 34px);
}
.sheet {
    width: 100%;
    table-layout: fixed;
    border-spacing: 0;
    background: #fff;
    font: 14px "Noto Sans CJK JP", sans-serif;
    color: #222;
}
.w-row { width: 34px; }
.w-a { width: 104px; }
.w-month { width: 114px; }
.w-total { width: 120px; }
.w-std { width: 72px; }
.sheet th {
    padding: 0;
    border-right: 1px solid #a0a0a0;
    border-bottom: 1px solid #b5b5b5;
    background: #efefef;
    font-weight: normal;
    line-height: 20px;
    color: #333;
}
.sheet thead th {
    height: 24px;
    border-bottom-color: #999;
    border-right-color: #c4c4c4;
}
.sheet tbody th {
    height: 36px;
    padding-bottom: 3px;
    vertical-align: bottom;
}
.sheet tbody td {
    padding: 0 2px 2px 0;
    border-right: 1px solid #e1e1e1;
    border-bottom: 1px solid #e1e1e1;
    text-align: right;
    line-height: 20px;
}
.sheet .short th { height: 25px; padding-bottom: 2px; }
.sheet .tall th { height: 38px; }
.sheet .corner {
    background: linear-gradient(135deg, transparent 50%, #b5b5b5 50%) no-repeat 15px 4px / 16px 16px #efefef;
}
.sheet th.current {
    background: #d2d2d2;
    color: #217346;
}
.sheet thead .current { border-bottom: 2px solid #217346; }
.sheet tbody .current { border-right: 2px solid #217346; }
.sheet td.head {
    padding-right: 0;
    text-align: center;
    font-size: 15px;
    font-weight: bold;
    color: #000;
}
.sheet td.fill { background: #d9e1f2; border-color: #d9e1f2; }
.sheet td.line-r { border-right-color: #000; }
.sheet td.line-b { border-bottom-color: #000; }
.sheet td.double-b { padding-bottom: 0; border-bottom: 3px double #000; }
.sheet td.minus { color: #f00; }
.sheet td.selected { position: relative; }
.selected::before {
    content: "";
    position: absolute;
    inset: -2px;
    border: 2px solid #217346;
}
.selected::after {
    content: "";
    position: absolute;
    right: -3px;
    bottom: -3px;
    width: 6px;
    height: 6px;
    border: 1px solid #fff;
    border-width: 1px 0 0 1px;
    background: #217346;
}
/* コピー範囲 A1:I6 の点線 */
.ants {
    position: absolute;
    top: 24px;
    left: 34px;
    width: 1041px;
    height: 216px;
    border: 2px dashed #217346;
    border-width: 1px 2px 2px 1px;
}

/* scroll bars */
.vscroll {
    display: flex;
    flex-direction: column;
    align-items: center;
    width: 15px;
    margin: 0 3px 0 2px;
    padding: 5px 0;
    border-radius: 8px;
    background: #f7f7f7;
}
.thumb {
    border-radius: 5px;
    background: #717171;
}
.vscroll .thumb {
    width: 9px;
    flex: 594;
    margin-top: 4px;
}
.vscroll::after {
    content: "";
    order: 1;
    flex: 178;
}
.vscroll .down { order: 2; }
.up, .down, .left, .right {
    width: 0;
    height: 0;
    border: 5px solid transparent;
}
.up { border-top: 0; border-bottom: 7px solid #606060; }
.down { border-bottom: 0; border-top: 7px solid #606060; }
.left { border-left: 0; border-right: 7px solid #606060; }
.right { border-right: 0; border-left: 7px solid #606060; }

/* sheet tabs */
.sheet-tabs {
    display: flex;
    flex: none;
    height: 32px;
    border-top: 1px solid #e1e1e1;
    border-bottom: 1px solid #c8c6c4;
    font-size: 14px;
}
.nav {
    width: 32px;
}
.nav:first-child {
    margin-left: 16px;
}
.nav svg {
    width: 8px;
    height: 12px;
}
.sheet-tab {
    width: 77px;
    height: 22px;
    margin-top: 4px;
    border-right: 1px solid #d2d0ce;
}
.sheet-tab.active {
    width: 69px;
    height: 28px;
    margin: -1px 4px 0 36px;
    border: 1px solid #e1e1e1;
    border-top: 0;
    border-radius: 0 0 6px 6px;
    background: #fff;
}
.active span {
    padding: 0 2px 1px;
    border-bottom: 2px solid #107c41;
}
.add {
    width: 96px;
}
.add svg {
    width: 12px;
    height: 12px;
}
.sheet-tabs .dots {
    margin-left: auto;
    margin-right: 12px;
    line-height: 30px;
}
.hscroll {
    display: flex;
    align-items: center;
    width: 38%;
    height: 18px;
    margin: 5px 18px 0 0;
    padding: 0 6px;
    border-radius: 8px;
    background: #f7f7f7;
}
.hscroll .thumb {
    height: 9px;
    flex: 667;
    margin-left: 4px;
}
.hscroll::after {
    content: "";
    order: 1;
    flex: 33;
}
.hscroll .right { order: 2; }

/* status bar */
.status {
    display: flex;
    align-items: center;
    flex: none;
    height: 22px;
    padding-right: 19px;
    background: #f5f5f5;
}
.message {
    flex: 1;
    padding-left: 7px;
    font-size: 11px;
}
.view {
    display: flex;
    align-items: center;
    justify-content: center;
    width: 40px;
    height: 22px;
}
.view.on {
    border: 0;
    border-radius: 0;
    background: #dedede;
}
.view svg {
    width: 14px;
    height: 14px;
}
.zoom-btn {
    width: 18px;
    font-size: 14px;
    line-height: 20px;
}
.status input {
    appearance: none;
    width: 100px;
    height: 14px;
    background: linear-gradient(#717171, #717171) no-repeat center / 100% 1px;
}
.status input::-webkit-slider-thumb {
    appearance: none;
    width: 5px;
    height: 11px;
    background: #606060;
}
.percent {
    width: 42px;
    text-align: right;
}
```
